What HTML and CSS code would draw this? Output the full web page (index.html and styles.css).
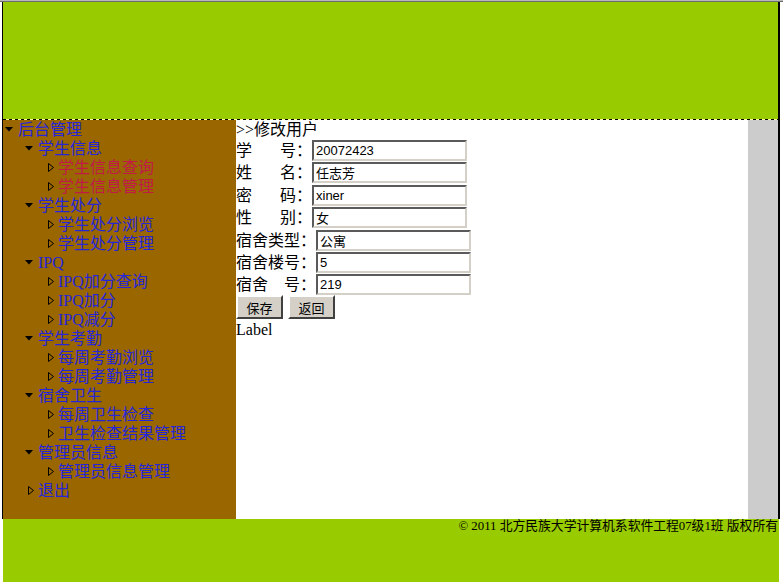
FILE: index.html
```html
<!DOCTYPE html>
<html lang="zh-CN">
<head>
<meta charset="utf-8">
<title>修改用户</title>
<link rel="stylesheet" href="styles.css">
</head>
<body>
<div class="topline"></div>
<div class="frame">
  <div class="header"></div>
  <div class="dash"></div>
  <div class="main">
    <nav class="side">
      <div class="node lv0"><span class="ico"><svg class="exp" width="8" height="5" viewBox="0 0 8 5"><polygon points="0,0 8,0 4,4.5" fill="#000"/></svg></span><span class="txt">后台管理</span></div>
      <div class="node lv1"><span class="ico"><svg class="exp" width="8" height="5" viewBox="0 0 8 5"><polygon points="0,0 8,0 4,4.5" fill="#000"/></svg></span><span class="txt">学生信息</span></div>
      <div class="node lv2"><span class="ico"><svg class="leaf" width="6" height="9" viewBox="0 0 6 9"><polygon points="0.5,0.5 5.5,4.5 0.5,8.5" fill="none" stroke="#000"/></svg></span><span class="txt sel">学生信息查询</span></div>
      <div class="node lv2"><span class="ico"><svg class="leaf" width="6" height="9" viewBox="0 0 6 9"><polygon points="0.5,0.5 5.5,4.5 0.5,8.5" fill="none" stroke="#000"/></svg></span><span class="txt sel">学生信息管理</span></div>
      <div class="node lv1"><span class="ico"><svg class="exp" width="8" height="5" viewBox="0 0 8 5"><polygon points="0,0 8,0 4,4.5" fill="#000"/></svg></span><span class="txt">学生处分</span></div>
      <div class="node lv2"><span class="ico"><svg class="leaf" width="6" height="9" viewBox="0 0 6 9"><polygon points="0.5,0.5 5.5,4.5 0.5,8.5" fill="none" stroke="#000"/></svg></span><span class="txt">学生处分浏览</span></div>
      <div class="node lv2"><span class="ico"><svg class="leaf" width="6" height="9" viewBox="0 0 6 9"><polygon points="0.5,0.5 5.5,4.5 0.5,8.5" fill="none" stroke="#000"/></svg></span><span class="txt">学生处分管理</span></div>
      <div class="node lv1"><span class="ico"><svg class="exp" width="8" height="5" viewBox="0 0 8 5"><polygon points="0,0 8,0 4,4.5" fill="#000"/></svg></span><span class="txt">IPQ</span></div>
      <div class="node lv2"><span class="ico"><svg class="leaf" width="6" height="9" viewBox="0 0 6 9"><polygon points="0.5,0.5 5.5,4.5 0.5,8.5" fill="none" stroke="#000"/></svg></span><span class="txt">IPQ加分查询</span></div>
      <div class="node lv2"><span class="ico"><svg class="leaf" width="6" height="9" viewBox="0 0 6 9"><polygon points="0.5,0.5 5.5,4.5 0.5,8.5" fill="none" stroke="#000"/></svg></span><span class="txt">IPQ加分</span></div>
      <div class="node lv2"><span class="ico"><svg class="leaf" width="6" height="9" viewBox="0 0 6 9"><polygon points="0.5,0.5 5.5,4.5 0.5,8.5" fill="none" stroke="#000"/></svg></span><span class="txt">IPQ减分</span></div>
      <div class="node lv1"><span class="ico"><svg class="exp" width="8" height="5" viewBox="0 0 8 5"><polygon points="0,0 8,0 4,4.5" fill="#000"/></svg></span><span class="txt">学生考勤</span></div>
      <div class="node lv2"><span class="ico"><svg class="leaf" width="6" height="9" viewBox="0 0 6 9"><polygon points="0.5,0.5 5.5,4.5 0.5,8.5" fill="none" stroke="#000"/></svg></span><span class="txt">每周考勤浏览</span></div>
      <div class="node lv2"><span class="ico"><svg class="leaf" width="6" height="9" viewBox="0 0 6 9"><polygon points="0.5,0.5 5.5,4.5 0.5,8.5" fill="none" stroke="#000"/></svg></span><span class="txt">每周考勤管理</span></div>
      <div class="node lv1"><span class="ico"><svg class="exp" width="8" height="5" viewBox="0 0 8 5"><polygon points="0,0 8,0 4,4.5" fill="#000"/></svg></span><span class="txt">宿舍卫生</span></div>
      <div class="node lv2"><span class="ico"><svg class="leaf" width="6" height="9" viewBox="0 0 6 9"><polygon points="0.5,0.5 5.5,4.5 0.5,8.5" fill="none" stroke="#000"/></svg></span><span class="txt">每周卫生检查</span></div>
      <div class="node lv2"><span class="ico"><svg class="leaf" width="6" height="9" viewBox="0 0 6 9"><polygon points="0.5,0.5 5.5,4.5 0.5,8.5" fill="none" stroke="#000"/></svg></span><span class="txt">卫生检查结果管理</span></div>
      <div class="node lv1"><span class="ico"><svg class="exp" width="8" height="5" viewBox="0 0 8 5"><polygon points="0,0 8,0 4,4.5" fill="#000"/></svg></span><span class="txt">管理员信息</span></div>
      <div class="node lv2"><span class="ico"><svg class="leaf" width="6" height="9" viewBox="0 0 6 9"><polygon points="0.5,0.5 5.5,4.5 0.5,8.5" fill="none" stroke="#000"/></svg></span><span class="txt">管理员信息管理</span></div>
      <div class="node lv1"><span class="ico"><svg class="leaf" width="6" height="9" viewBox="0 0 6 9"><polygon points="0.5,0.5 5.5,4.5 0.5,8.5" fill="none" stroke="#000"/></svg></span><span class="txt">退出</span></div>
    </nav>
    <div class="content">
      <div class="title">&gt;&gt;修改用户</div>
      <div class="form form-a">
        <div class="row"><span class="lbl"><span>学</span><span>号：</span></span><input class="field" value="20072423"></div>
        <div class="row"><span class="lbl"><span>姓</span><span>名：</span></span><input class="field" value="任志芳"></div>
        <div class="row"><span class="lbl"><span>密</span><span>码：</span></span><input class="field" value="xiner"></div>
        <div class="row"><span class="lbl"><span>性</span><span>别：</span></span><input class="field" value="女"></div>
      </div>
      <div class="form form-b">
        <div class="row"><span class="lbl"><span>宿舍类型：</span></span><input class="field" value="公寓"></div>
        <div class="row"><span class="lbl"><span>宿舍楼号：</span></span><input class="field" value="5"></div>
        <div class="row"><span class="lbl"><span>宿舍</span><span>号：</span></span><input class="field" value="219"></div>
      </div>
      <div class="buttons">
        <button class="btn">保存</button>
        <button class="btn">返回</button>
      </div>
      <div class="label">Label</div>
    </div>
    <div class="gutter"></div>
  </div>
</div>
<div class="footer">© 2011 北方民族大学计算机系软件工程07级1班 版权所有</div>
</body>
</html>
```
FILE: styles.css
```css
html, body {
  margin: 0;
  padding: 0;
  background: #ffffff;
}
body {
  font-family: "Liberation Serif", "Noto Sans CJK SC", serif;
  font-size: 16px;
  color: #000;
}
.topline {
  height: 0;
  border-top: 1px solid #b8b8b8;
  border-bottom: 1px solid #6e6e6e;
}
.frame {
  margin-left: 2px;
  width: 778px;
  box-sizing: border-box;
  border-left: 1px solid #000;
  border-right: 2px solid #000;
}
.header {
  height: 117px;
  background: #99cc00;
}
.dash {
  height: 1px;
  background: repeating-linear-gradient(90deg, #000 0 3px, #ffff99 3px 6px);
}
.main {
  display: flex;
  height: 399px;
}
.side {
  width: 233px;
  flex: none;
  background: #996600;
  padding-left: 2px;
  box-sizing: border-box;
}
.node {
  display: flex;
  align-items: center;
  height: 19px;
  line-height: 19px;
  white-space: nowrap;
}
.lv1 { padding-left: 20px; }
.lv2 { padding-left: 40px; }
.ico {
  width: 13px;
  flex: none;
  display: flex;
  align-items: center;
}
.ico .leaf { margin-left: 3px; }
.ico svg { display: block; }
.txt {
  color: #2626d8;
  font-size: 16px;
}
.txt.sel { color: #c01a48; }
.content {
  width: 512px;
  flex: none;
  background: #ffffff;
}
.title {
  height: 19px;
  line-height: 19px;
  white-space: nowrap;
}
.form .row {
  display: flex;
  align-items: center;
}
.form-a .row { height: 22.5px; }
.form-b .row { height: 22px; }
.lbl {
  display: flex;
  justify-content: space-between;
  white-space: nowrap;
  line-height: 19px;
}
.form-a .lbl { width: 76px; }
.form-b .lbl { width: 80px; }
.field {
  box-sizing: border-box;
  width: 155px;
  height: 21px;
  margin: 0;
  padding: 0 2px;
  border: 2px solid;
  border-color: #5a5a5a #d4d0c8 #d4d0c8 #5a5a5a;
  background: #fff;
  font-family: "Liberation Sans", "Noto Sans CJK SC", sans-serif;
  font-size: 13px;
  color: #000;
  outline: none;
}
.buttons {
  display: flex;
  gap: 5px;
  height: 24px;
  align-items: flex-start;
}
.btn {
  box-sizing: border-box;
  width: 47px;
  height: 24px;
  margin: 0;
  padding: 0;
  background: #d4d0c8;
  border: 2px solid;
  border-color: #ffffff #404040 #404040 #ffffff;
  font-family: "Noto Sans CJK SC", sans-serif;
  font-size: 13px;
  color: #000;
}
.label {
  line-height: 19px;
  height: 19px;
  margin-top: 1px;
}
.gutter {
  flex: 1;
  background: #cccccc;
}
.footer {
  margin-left: 3px;
  width: 776px;
  height: 63px;
  box-sizing: border-box;
  background: #99cc00;
  text-align: right;
  padding-right: 1px;
  font-family: "Liberation Serif", "Noto Sans CJK SC", serif;
  font-size: 12.8px;
  line-height: 15px;
  white-space: nowrap;
}
```
